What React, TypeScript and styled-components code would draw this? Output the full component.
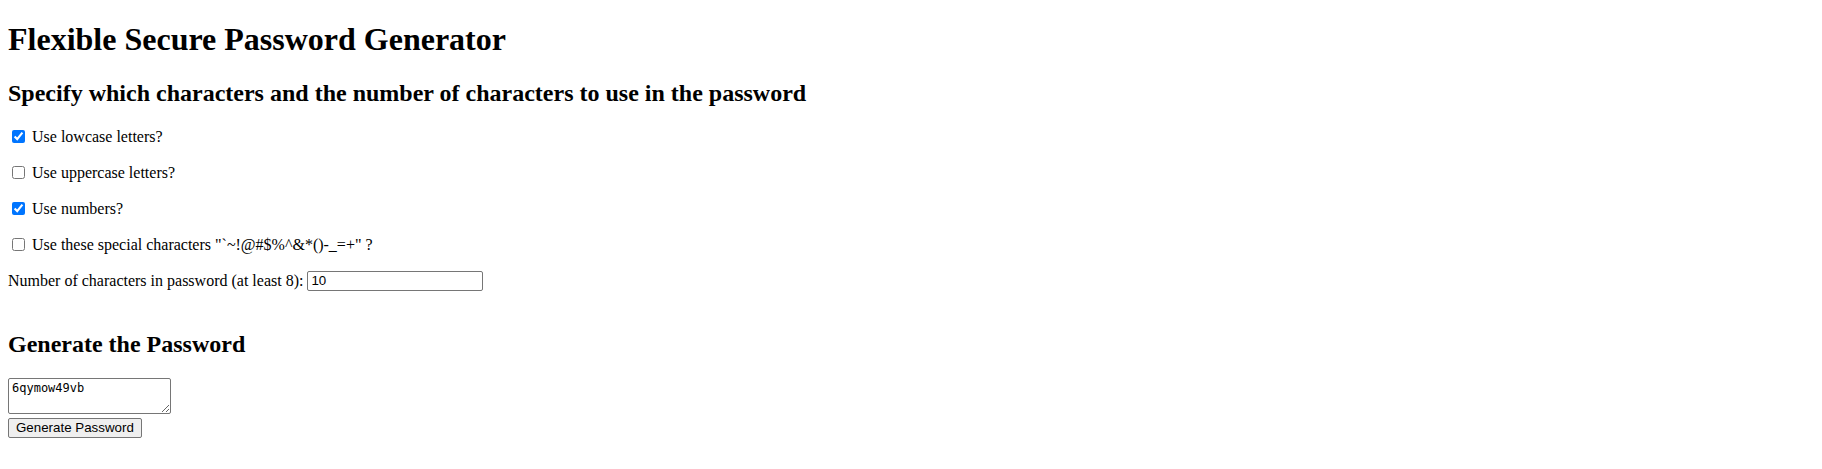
import React, { useState } from 'react';
import styled, { createGlobalStyle } from 'styled-components';

const GlobalStyle = createGlobalStyle`
  html, body {
    background: #ffffff;
  }
  body {
    margin: 0;
    color: #000000;
    font-family: "Liberation Serif", "Times New Roman", serif;
    font-size: 16px;
  }
`;

const Page = styled.main`
  padding: 0 8px 8px;
`;

const Title = styled.h1`
  font-size: 32px;
  font-weight: bold;
  margin: 21.44px 0;
`;

const Heading = styled.h2`
  font-size: 24px;
  font-weight: bold;
  margin: 19.92px 0;
`;

const OptionRow = styled.p`
  margin: 16px 0;
  display: flex;
  align-items: center;
  min-height: 20px;
`;

const Check = styled.input.attrs({ type: 'checkbox' })`
  width: 13px;
  height: 13px;
  margin: 3px 3px 3px 4px;
  accent-color: #0075ff;
`;

const LengthRow = styled.div`
  display: flex;
  align-items: center;
  height: 20px;
  margin: 13px 0 40px;
`;

const LengthInput = styled.input.attrs({ type: 'text' })`
  box-sizing: border-box;
  width: 176px;
  height: 20px;
  margin-left: 4px;
  padding: 1px 3px;
  border: 1px solid #767676;
  border-radius: 2px;
  font-family: "Liberation Sans", Arial, sans-serif;
  font-size: 13.33px;
  color: #000000;
`;

const Output = styled.div`
  display: flex;
  flex-direction: column;
  align-items: flex-start;
  gap: 4px;
`;

const PasswordBox = styled.textarea`
  box-sizing: border-box;
  width: 163px;
  height: 36px;
  margin: 0;
  padding: 2px 3px;
  border: 1px solid #767676;
  border-radius: 2px;
  font-family: "DejaVu Sans Mono", monospace;
  font-size: 12px;
  line-height: 1.2;
  color: #000000;
`;

const GenerateButton = styled.button`
  box-sizing: border-box;
  height: 20px;
  margin: 0;
  padding: 1px 7px;
  border: 1px solid #767676;
  border-radius: 2px;
  background: #efefef;
  font-family: "Liberation Sans", Arial, sans-serif;
  font-size: 13.33px;
  color: #000000;
`;

const options = [
  { label: 'Use lowcase letters?', checked: true },
  { label: 'Use uppercase letters?', checked: false },
  { label: 'Use numbers?', checked: true },
  { label: 'Use these special characters "`~!@#$%^&*()-_=+" ?', checked: false },
];

export default function App() {
  const [length, setLength] = useState('10');
  const [password, setPassword] = useState('6qymow49vb');

  return (
    <Page>
      <GlobalStyle />
      <Title>Flexible Secure Password Generator</Title>
      <Heading>Specify which characters and the number of characters to use in the password</Heading>
      {options.map((o) => (
        <OptionRow key={o.label}>
          <Check defaultChecked={o.checked} />
          {'\u00a0'}{o.label}
        </OptionRow>
      ))}
      <LengthRow>
        Number of characters in password (at least 8):
        <LengthInput value={length} onChange={(e) => setLength(e.target.value)} />
      </LengthRow>
      <Heading>Generate the Password</Heading>
      <Output>
        <PasswordBox value={password} onChange={(e) => setPassword(e.target.value)} />
        <GenerateButton>Generate Password</GenerateButton>
      </Output>
    </Page>
  );
}
